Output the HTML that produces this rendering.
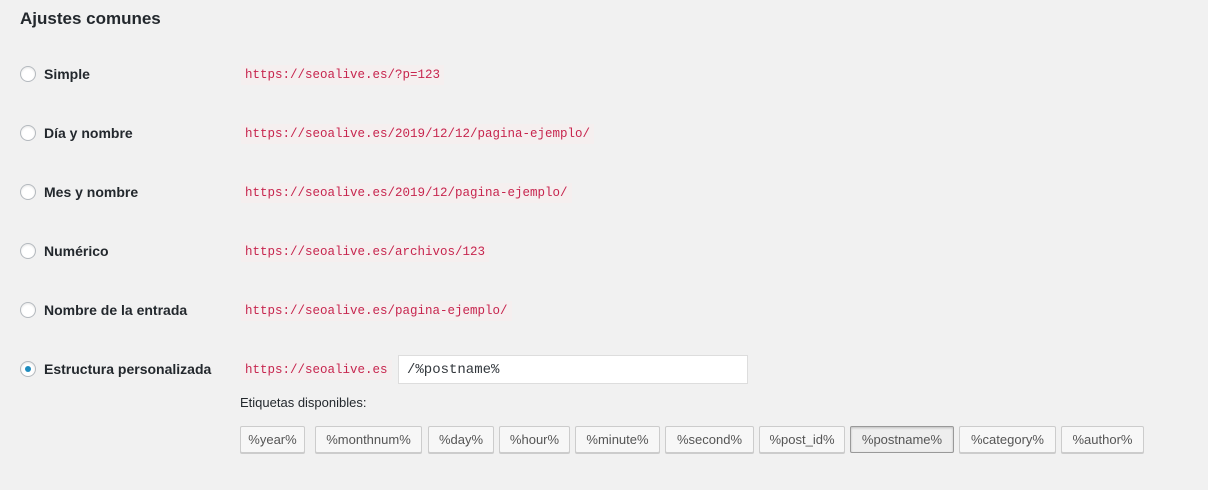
<!DOCTYPE html>
<html><head><style>
body{margin:0;background:#f1f1f1;width:1208px;height:490px;position:relative;font-family:"Liberation Sans",sans-serif;color:#23282d;overflow:hidden}
h2{position:absolute;left:20px;top:9px;margin:0;font-size:17px;font-weight:600;color:#23282d}
.row{position:absolute;left:20px;height:20px;}
.radio{position:absolute;left:0;top:0px;width:14px;height:14px;border:1px solid #b4b9be;border-radius:50%;background:#fff;box-shadow:inset 0 1px 2px rgba(0,0,0,.1)}
.radio.on:after{content:"";position:absolute;left:4px;top:4px;width:6px;height:6px;border-radius:50%;background:#1e8cbe}
.lbl{position:absolute;left:24px;top:0;font-size:14px;font-weight:600;white-space:nowrap}
code{position:absolute;left:221px;top:-1px;font-family:"Liberation Mono",monospace;font-size:12.5px;color:#c7254e;background:#f5efef;padding:3px 4px;white-space:nowrap}
.inp{position:absolute;left:398px;top:355px;height:29px;background:#fff;border:1px solid #ddd;font-family:"Liberation Mono",monospace;font-size:14px;line-height:28px;padding-left:8px;box-sizing:border-box;width:350px;color:#32373c}
.et{position:absolute;left:240px;top:395px;font-size:13px;color:#23282d}
.b{position:absolute;top:426px;height:27px;box-sizing:border-box;border:1px solid #ccc;border-radius:2px;background:#f7f7f7;box-shadow:0 1px 0 #ccc;font-size:13px;color:#555;text-align:center;line-height:25px}
.b.on{background:#eee;border-color:#999;box-shadow:inset 0 1px 2px rgba(0,0,0,.2)}
</style></head><body>
<h2>Ajustes comunes</h2>
<div class="row" style="top:66px"><span class="radio"></span><span class="lbl">Simple</span><code>https://seoalive.es/?p=123</code></div>
<div class="row" style="top:125px"><span class="radio"></span><span class="lbl">Día y nombre</span><code>https://seoalive.es/2019/12/12/pagina-ejemplo/</code></div>
<div class="row" style="top:184px"><span class="radio"></span><span class="lbl">Mes y nombre</span><code>https://seoalive.es/2019/12/pagina-ejemplo/</code></div>
<div class="row" style="top:243px"><span class="radio"></span><span class="lbl">Numérico</span><code>https://seoalive.es/archivos/123</code></div>
<div class="row" style="top:302px"><span class="radio"></span><span class="lbl">Nombre de la entrada</span><code>https://seoalive.es/pagina-ejemplo/</code></div>
<div class="row" style="top:361px"><span class="radio on"></span><span class="lbl">Estructura personalizada</span><code>https://seoalive.es</code></div>
<div class="inp">/%postname%</div>
<div class="et">Etiquetas disponibles:</div>
<div class="b" style="left:240px;width:65px">%year%</div>
<div class="b" style="left:315px;width:107px">%monthnum%</div>
<div class="b" style="left:428px;width:66px">%day%</div>
<div class="b" style="left:499px;width:71px">%hour%</div>
<div class="b" style="left:575px;width:85px">%minute%</div>
<div class="b" style="left:665px;width:89px">%second%</div>
<div class="b" style="left:759px;width:86px">%post_id%</div>
<div class="b on" style="left:850px;width:104px">%postname%</div>
<div class="b" style="left:959px;width:97px">%category%</div>
<div class="b" style="left:1061px;width:83px">%author%</div>
</body></html>
